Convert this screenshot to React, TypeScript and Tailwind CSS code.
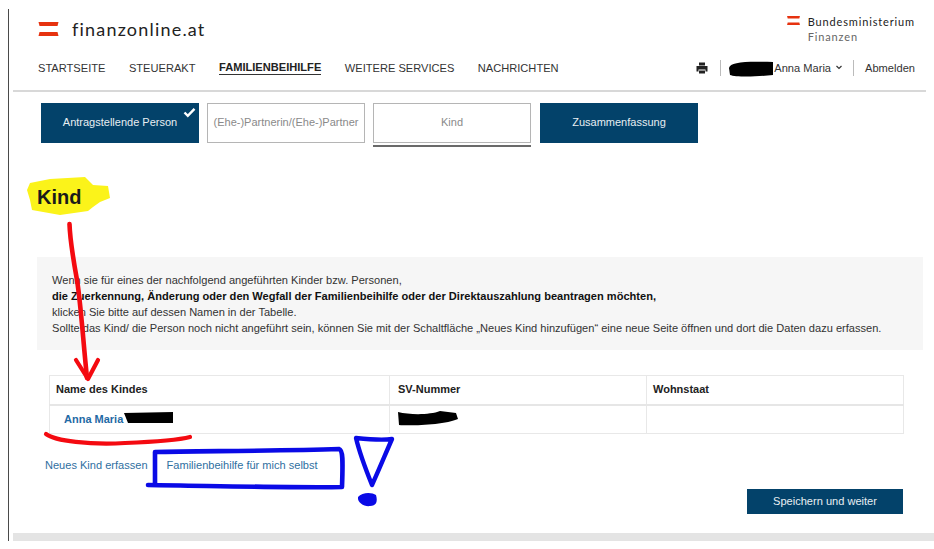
const A = "font-['Liberation_Sans',Arial,sans-serif]";

function Flag({ w, h }: { w: number; h: number }) {
  return (
    <svg width={w} height={h} viewBox="0 0 20 14" className="shrink-0">
      <path d="M0 0H20L19 4H1Z" fill="#e6320f" />
      <path d="M1 10H19L20 14H0Z" fill="#e6320f" />
    </svg>
  );
}

function Step({ label, kind }: { label: string; kind: "done" | "blue" | "idle" | "active" }) {
  const blue = kind === "done" || kind === "blue";
  return (
    <div className="relative h-[40px] w-[158px]">
      <div
        className={`flex h-[40px] items-center justify-center pb-[1px] text-[11px] ${
          blue
            ? "bg-[#03426a] text-[#e8eef2]"
            : "border border-[#b5b5b5] bg-white text-[#8a8a8a]"
        }`}
      >
        {label}
      </div>
      {kind === "done" && (
        <svg width="13" height="11" viewBox="0 0 13 11" className="absolute right-[3px] top-[4px]">
          <path d="M1.5 5.5L4.8 8.8L11.5 1.8" fill="none" stroke="#fff" strokeWidth="2.4" />
        </svg>
      )}
      {kind === "active" && <div className="absolute left-0 right-0 top-[42px] h-[2px] bg-[#6a6a6a]" />}
    </div>
  );
}

function Annotations() {
  return (
    <svg width="934" height="549" viewBox="0 0 934 549" className="pointer-events-none absolute left-0 top-0">
      {/* yellow highlight */}
      <path
        d="M30 183 L50 179 L85 177 L93 185 L108 186 L110 198 L100 202 L93 207 L88 211 L60 215 L32 210 L30 200 L27 190 Z"
        fill="#fbf31a"
      />
      {/* red arrow */}
      <g fill="none" stroke="#f40a10" strokeLinecap="round" strokeLinejoin="round">
        <path d="M69.5 224 C70 240 73 258 77 280 C81 305 83 340 87 378" strokeWidth="4.6" />
        <path d="M76 360 L88 379 L98 360" strokeWidth="4.2" />
        <path d="M46 434 C55 441 90 445 125 443 C150 442 175 441 190 437" strokeWidth="4.2" />
      </g>
      {/* blue box + exclamation */}
      <g fill="none" stroke="#0a0ae6" strokeLinecap="round" strokeLinejoin="round">
        <path
          d="M155 452 C200 451 280 451 339 449 C343 450 343 460 342 487 C300 488 220 486 148 485 M155 452 L155 485"
          strokeWidth="4.6"
        />
        <path d="M356 438 C375 440 385 440 392 439 C385 455 378 472 372 485 C366 470 360 455 356 438 Z" strokeWidth="4.4" />
      </g>
      <path d="M358 497 C362 492 372 492 376 495 C378 502 376 506 370 506 C365 507 357 503 358 497 Z" fill="#0a0ae6" />
      {/* redactions */}
      <path d="M729 68 C730 62 745 61 773 62 L773 75 C755 77 735 77 730 75 Z" fill="#000" />
      <path d="M124 413 L173 412 L173 423 L128 423 Z" fill="#000" />
      <path d="M398 412 C410 415 430 415 440 411 L456 413 L458 419 C445 425 410 426 399 425 Z" fill="#000" />
    </svg>
  );
}

export default function App() {
  return (
    <div className={`relative h-[549px] w-[934px] overflow-hidden bg-white ${A}`}>
      <div className="ml-[8px] mt-[9px] flex h-[532px] flex-col border-l border-[#4a4a4a] pl-[4px]">
        <header className="flex h-[37px] shrink-0 justify-between pl-[25px] pr-[19px]">
          <div className="flex items-center gap-[13px] pt-[3px]">
            <Flag w={21} h={14} />
            <span className="font-['Lato',sans-serif] text-[18px] leading-none tracking-[1.2px] text-[#222]">
              finanzonline.at
            </span>
          </div>
          <div className="flex items-start gap-[8px] pt-[5px]">
            <div className="pt-[2px]">
              <Flag w={13} h={9} />
            </div>
            <div className="font-['Lato',sans-serif] text-[11px] leading-[15px] tracking-[0.85px]">
              <div className="text-[#222]">Bundesministerium</div>
              <div className="text-[#666]">Finanzen</div>
            </div>
          </div>
        </header>

        <nav className="flex h-[44px] shrink-0 items-center justify-between pl-[25px] pr-[19px] text-[11.1px] text-[#333]">
          <div className="flex items-center gap-[23.5px]">
            <span>STARTSEITE</span>
            <span>STEUERAKT</span>
            <span className="border-b border-[#333] font-bold leading-[13px] text-[#222]">FAMILIENBEIHILFE</span>
            <span>WEITERE SERVICES</span>
            <span>NACHRICHTEN</span>
          </div>
          <div className="flex items-center">
            <svg width="12" height="12" viewBox="0 0 12 12" className="mr-[12px]">
              <path d="M3 0.5H9V3.5H3Z" fill="#222" />
              <path d="M0.5 4H11.5V9.5H9.5V7.5H2.5V9.5H0.5Z" fill="#222" />
              <path d="M3 8.5H9V11.5H3Z" fill="#222" />
            </svg>
            <div className="mr-[53px] h-[16px] w-px bg-[#bbb]" />
            <span className="flex items-center gap-[5px]">
              Anna Maria
              <svg width="6" height="5" viewBox="0 0 6 5">
                <path d="M0.5 1L3 3.5L5.5 1" fill="none" stroke="#333" strokeWidth="1.2" />
              </svg>
            </span>
            <div className="ml-[11px] mr-[11px] h-[16px] w-px bg-[#bbb]" />
            <span>Abmelden</span>
          </div>
        </nav>

        <div className="mr-[8px] h-[2px] shrink-0 bg-[#d8d8d8]" />

        <div className="flex shrink-0 gap-[8px] pl-[28px] pt-[11px]">
          <Step label="Antragstellende Person" kind="done" />
          <Step label="(Ehe-)Partnerin/(Ehe-)Partner" kind="idle" />
          <Step label="Kind" kind="active" />
          <div className="ml-[1px]">
            <Step label="Zusammenfassung" kind="blue" />
          </div>
        </div>

        <h1 className="h-[78px] shrink-0 pl-[24px] pt-[42px] text-[20px] font-bold leading-[24px] text-[#1a1a1a]">
          <span className="relative z-10">Kind</span>
        </h1>

        <section className="ml-[24px] mr-[11px] mt-[36px] h-[93px] shrink-0 bg-[#f6f6f6] px-[15px] pt-[15px] text-[11.07px] leading-[16px] text-[#333]">
          <p>Wenn sie für eines der nachfolgend angeführten Kinder bzw. Personen,</p>
          <p className="font-bold text-[#111]">
            die Zuerkennung, Änderung oder den Wegfall der Familienbeihilfe oder der Direktauszahlung beantragen möchten,
          </p>
          <p>klicken Sie bitte auf dessen Namen in der Tabelle.</p>
          <p>
            Sollte das Kind/ die Person noch nicht angeführt sein, können Sie mit der Schaltfläche „Neues Kind hinzufügen“ eine neue Seite öffnen und dort die Daten dazu erfassen.
          </p>
        </section>

        <table className="ml-[36px] mt-[25px] w-[855px] shrink-0 table-fixed border-collapse text-[11px]">
          <colgroup>
            <col className="w-[340px]" />
            <col className="w-[257px]" />
            <col />
          </colgroup>
          <thead>
            <tr className="h-[29px] border-b-2 border-[#e6e6e6] text-left text-[#222]">
              <th className="border border-[#e8e8e8] pb-[2px] pl-[6px] font-bold">Name des Kindes</th>
              <th className="border border-[#e8e8e8] pb-[2px] pl-[8px] font-bold">SV-Nummer</th>
              <th className="border border-[#e8e8e8] pb-[2px] pl-[6px] font-bold">Wohnstaat</th>
            </tr>
          </thead>
          <tbody>
            <tr className="h-[29px]">
              <td className="border border-[#e8e8e8] pl-[14px] font-bold text-[#1f6aa5]">Anna Maria</td>
              <td className="border border-[#e8e8e8]" />
              <td className="border border-[#e8e8e8]" />
            </tr>
          </tbody>
        </table>

        <div className="ml-[32px] mt-[24px] flex shrink-0 gap-[19px] text-[11.05px] leading-[14px] text-[#2f6f9f]">
          <span>Neues Kind erfassen</span>
          <span>Familienbeihilfe für mich selbst</span>
        </div>

        <div className="mr-[31px] mt-[17px] flex shrink-0 justify-end">
          <div className="flex h-[25px] w-[156px] items-center justify-center bg-[#03426a] text-[11.07px] text-[#e8eef2]">
            Speichern und weiter
          </div>
        </div>

        <div className="mt-auto h-[8px] shrink-0 bg-[#e4e4e4]" />
      </div>
      <Annotations />
    </div>
  );
}
